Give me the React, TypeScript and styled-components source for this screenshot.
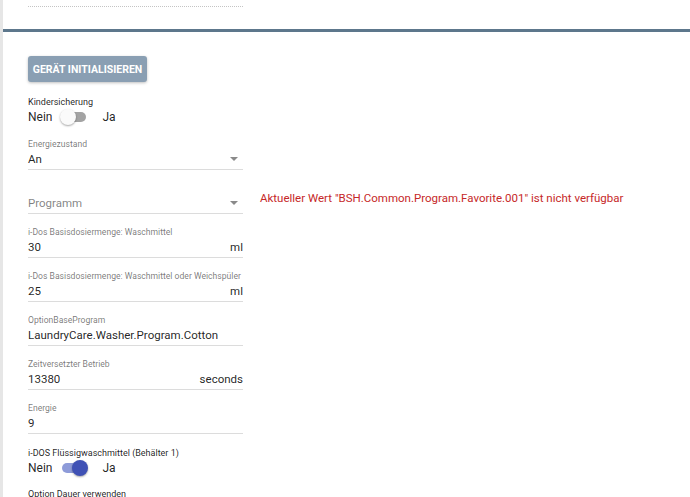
import React from "react";
import styled, { createGlobalStyle } from "styled-components";

const GlobalStyle = createGlobalStyle`
  html, body {
    margin: 0;
    padding: 0;
    background: #fff;
    font-family: Roboto, "Liberation Sans", Arial, sans-serif;
  }
`;

const Page = styled.div`
  min-height: 497px;
  border-left: 3px solid #e6e6e6;
  overflow: hidden;
`;

const PrevSection = styled.div`
  box-sizing: border-box;
  height: 29px;
  padding: 6px 0 0 25px;
  .dotted {
    width: 215px;
    border-bottom: 1px dotted #c4c4c4;
  }
`;

const Divider = styled.div`
  height: 3px;
  background: #5d778c;
`;

const Content = styled.div`
  padding: 24px 25px 0;
`;

const Button = styled.button`
  display: block;
  height: 26px;
  width: 119px;
  padding: 0;
  border: none;
  border-radius: 3px;
  background: #8a9fb3;
  color: #fff;
  font-family: inherit;
  font-size: 10.5px;
  font-weight: 700;
  white-space: nowrap;
  text-transform: uppercase;
  box-shadow: 0 1px 3px rgba(0, 0, 0, 0.25);
`;

const SwitchBlock = styled.div<{ $mt: number }>`
  margin-top: ${(p) => p.$mt}px;
`;

const SwitchLabel = styled.div`
  font-size: 9px;
  line-height: 12px;
  color: rgba(0, 0, 0, 0.87);
  white-space: nowrap;
`;

const SwitchRow = styled.div`
  display: flex;
  align-items: center;
  height: 18px;
  font-size: 12px;
  color: rgba(0, 0, 0, 0.87);
`;

const SwitchTrack = styled.span<{ $on: boolean }>`
  position: relative;
  display: inline-block;
  width: 28px;
  height: 18px;
  margin: 0 14px 0 8px;
  &::before {
    content: "";
    position: absolute;
    left: 2px;
    top: 4px;
    width: 24px;
    height: 10px;
    border-radius: 5px;
    background: ${(p) => (p.$on ? "#8e9bd9" : "#a3a3a3")};
  }
  &::after {
    content: "";
    position: absolute;
    top: 1px;
    left: ${(p) => (p.$on ? "12px" : "0")};
    width: 16px;
    height: 16px;
    border-radius: 50%;
    background: ${(p) => (p.$on ? "#3f51b5" : "#fafafa")};
    box-shadow: 0 1px 2px rgba(0, 0, 0, 0.35);
  }
`;

const FieldRow = styled.div`
  display: flex;
  align-items: flex-start;
  margin-top: 12px;
`;

const Field = styled.div<{ $mt?: number }>`
  flex-shrink: 0;
  width: 215px;
  margin-top: ${(p) => p.$mt ?? 12}px;
`;

const Label = styled.div`
  height: 12px;
  font-size: 8.6px;
  line-height: 12px;
  color: rgba(0, 0, 0, 0.54);
  white-space: nowrap;
`;

const Value = styled.div<{ $placeholder?: boolean }>`
  display: flex;
  align-items: center;
  justify-content: space-between;
  height: 18px;
  padding-bottom: 1px;
  border-bottom: 1px solid #dcdcdc;
  font-size: 11.5px;
  line-height: 18px;
  color: ${(p) => (p.$placeholder ? "rgba(0,0,0,0.5)" : "rgba(0,0,0,0.87)")};
`;

const Arrow = styled.span`
  width: 0;
  height: 0;
  margin-right: 5px;
  border-left: 4px solid transparent;
  border-right: 4px solid transparent;
  border-top: 4px solid #8a8a8a;
`;

const ErrorText = styled.div`
  margin-left: 17px;
  padding-top: 8px;
  font-size: 11.5px;
  line-height: 16px;
  color: #c62828;
  white-space: nowrap;
`;

const Toggle = ({ label, on, mt }: { label: string; on: boolean; mt: number }) => (
  <SwitchBlock $mt={mt}>
    <SwitchLabel>{label}</SwitchLabel>
    <SwitchRow>
      Nein
      <SwitchTrack $on={on} />
      Ja
    </SwitchRow>
  </SwitchBlock>
);

const TextField = ({ label, value, unit }: { label: string; value: string; unit?: string }) => (
  <Field>
    <Label>{label}</Label>
    <Value>
      <span>{value}</span>
      {unit && <span>{unit}</span>}
    </Value>
  </Field>
);

export default function App() {
  return (
    <>
      <GlobalStyle />
      <Page>
        <PrevSection>
          <div className="dotted" />
        </PrevSection>
        <Divider />
        <Content>
          <Button>Gerät initialisieren</Button>
          <Toggle label="Kindersicherung" on={false} mt={14} />
          <Field $mt={12}>
            <Label>Energiezustand</Label>
            <Value>
              <span>An</span>
              <Arrow />
            </Value>
          </Field>
          <FieldRow>
            <Field $mt={0}>
              <Label />
              <Value $placeholder>
                <span>Programm</span>
                <Arrow />
              </Value>
            </Field>
            <ErrorText>Aktueller Wert "BSH.Common.Program.Favorite.001" ist nicht verfügbar</ErrorText>
          </FieldRow>
          <TextField label="i-Dos Basisdosiermenge: Waschmittel" value="30" unit="ml" />
          <TextField label="i-Dos Basisdosiermenge: Waschmittel oder Weichspüler" value="25" unit="ml" />
          <TextField label="OptionBaseProgram" value="LaundryCare.Washer.Program.Cotton" />
          <TextField label="Zeitversetzter Betrieb" value="13380" unit="seconds" />
          <TextField label="Energie" value="9" />
          <Toggle label="i-DOS Flüssigwaschmittel (Behälter 1)" on={true} mt={13} />
          <SwitchBlock $mt={11}>
            <SwitchLabel>Option Dauer verwenden</SwitchLabel>
          </SwitchBlock>
        </Content>
      </Page>
    </>
  );
}
